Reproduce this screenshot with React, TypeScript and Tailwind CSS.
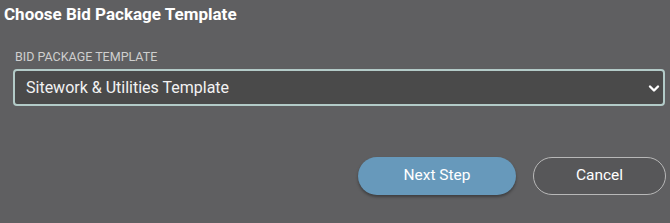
export default function App() {
  return (
    <div className="w-[670px] h-[223px] bg-[#5f5f61] overflow-hidden" style={{ fontFamily: "Roboto, 'Liberation Sans', sans-serif" }}>
      <div className="pl-[4px] pt-[2px]">
        <h1 className="text-[17px] leading-[24px] font-bold text-white">Choose Bid Package Template</h1>
      </div>
      <div className="pl-[13px] pr-[5px] pt-[23px]">
        <div className="pl-[2px] text-[12.5px] leading-[16px] text-[#cfcfcf]">BID PACKAGE TEMPLATE</div>
        <div className="mt-[4px] h-[37px] rounded-[4px] border-2 border-[#b3cbc8] bg-[#4a4a4a] flex items-center pl-[11px] pr-[3px]">
          <span className="flex-1 text-[16px] text-[#f2f2f2]">Sitework &amp; Utilities Template</span>
          <svg width="12" height="9" viewBox="0 0 12 9" className="mt-[2px]">
            <path d="M2 2.5 L6 6.5 L10 2.5" stroke="#ffffff" strokeWidth="2.4" fill="none" strokeLinecap="round" strokeLinejoin="round" />
          </svg>
        </div>
      </div>
      <div className="flex justify-end gap-[17px] pr-[4px] pt-[51px]">
        <button className="w-[158px] h-[38px] rounded-full bg-[#6799bb] text-white text-[15.5px] shadow-[0_2px_3px_rgba(0,0,0,0.35)]">Next Step</button>
        <button className="w-[133px] h-[38px] rounded-full border border-[#b8b8b8] bg-[#575759] text-white text-[15.5px]">Cancel</button>
      </div>
    </div>
  );
}
